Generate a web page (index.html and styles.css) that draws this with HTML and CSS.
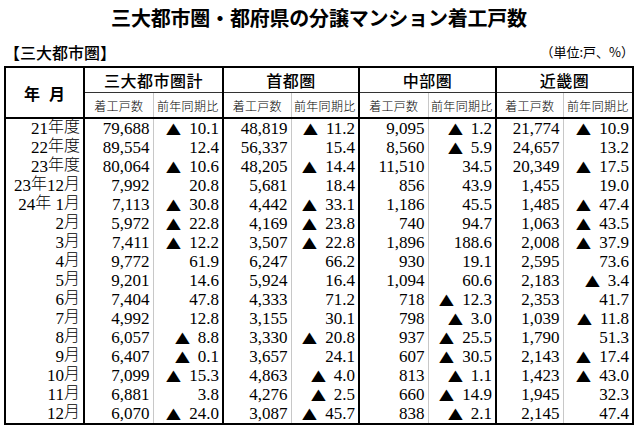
FILE: index.html
```html
<!DOCTYPE html>
<html lang="ja">
<head>
<meta charset="utf-8">
<title>三大都市圏・都府県の分譲マンション着工戸数</title>
<link rel="stylesheet" href="styles.css">
</head>
<body>
<div class="page">
  <h1 class="title">三大都市圏・都府県の分譲マンション着工戸数</h1>
  <div class="subbar">
    <span class="section">【三大都市圏】</span>
    <span class="unit">（単位:戸、%）</span>
  </div>
  <table class="data">
    <colgroup>
      <col class="c-y">
      <col class="c-a"><col class="c-b">
      <col class="c-a2"><col class="c-b2">
      <col class="c-a"><col class="c-b2">
      <col class="c-a3"><col class="c-b3">
    </colgroup>
    <thead>
      <tr class="h1">
        <th class="ym" rowspan="2">年<span class="sp"></span>月</th>
        <th class="grp" colspan="2">三大都市圏計</th>
        <th class="grp" colspan="2">首都圏</th>
        <th class="grp" colspan="2">中部圏</th>
        <th class="grp" colspan="2">近畿圏</th>
      </tr>
      <tr class="h2">
        <th class="sub sn">着工戸数</th><th class="sub sr">前年同期比</th>
        <th class="sub sn">着工戸数</th><th class="sub sr">前年同期比</th>
        <th class="sub sn">着工戸数</th><th class="sub sr">前年同期比</th>
        <th class="sub sn">着工戸数</th><th class="sub sr">前年同期比</th>
      </tr>
    </thead>
    <tbody>
      <tr><td class="y">21<span class="k">年度</span></td><td class="n">79,688</td><td class="r"><span class="t">▲</span> 10.1</td><td class="n">48,819</td><td class="r"><span class="t">▲</span> 11.2</td><td class="n">9,095</td><td class="r"><span class="t">▲</span> 1.2</td><td class="n">21,774</td><td class="r"><span class="t">▲</span> 10.9</td></tr>
      <tr><td class="y">22<span class="k">年度</span></td><td class="n">89,554</td><td class="r">12.4</td><td class="n">56,337</td><td class="r">15.4</td><td class="n">8,560</td><td class="r"><span class="t">▲</span> 5.9</td><td class="n">24,657</td><td class="r">13.2</td></tr>
      <tr><td class="y">23<span class="k">年度</span></td><td class="n">80,064</td><td class="r"><span class="t">▲</span> 10.6</td><td class="n">48,205</td><td class="r"><span class="t">▲</span> 14.4</td><td class="n">11,510</td><td class="r">34.5</td><td class="n">20,349</td><td class="r"><span class="t">▲</span> 17.5</td></tr>
      <tr><td class="y">23<span class="k">年</span>12<span class="k">月</span></td><td class="n">7,992</td><td class="r">20.8</td><td class="n">5,681</td><td class="r">18.4</td><td class="n">856</td><td class="r">43.9</td><td class="n">1,455</td><td class="r">19.0</td></tr>
      <tr><td class="y">24<span class="k">年</span> 1<span class="k">月</span></td><td class="n">7,113</td><td class="r"><span class="t">▲</span> 30.8</td><td class="n">4,442</td><td class="r"><span class="t">▲</span> 33.1</td><td class="n">1,186</td><td class="r">45.5</td><td class="n">1,485</td><td class="r"><span class="t">▲</span> 47.4</td></tr>
      <tr><td class="y">2<span class="k">月</span></td><td class="n">5,972</td><td class="r"><span class="t">▲</span> 22.8</td><td class="n">4,169</td><td class="r"><span class="t">▲</span> 23.8</td><td class="n">740</td><td class="r">94.7</td><td class="n">1,063</td><td class="r"><span class="t">▲</span> 43.5</td></tr>
      <tr><td class="y">3<span class="k">月</span></td><td class="n">7,411</td><td class="r"><span class="t">▲</span> 12.2</td><td class="n">3,507</td><td class="r"><span class="t">▲</span> 22.8</td><td class="n">1,896</td><td class="r">188.6</td><td class="n">2,008</td><td class="r"><span class="t">▲</span> 37.9</td></tr>
      <tr><td class="y">4<span class="k">月</span></td><td class="n">9,772</td><td class="r">61.9</td><td class="n">6,247</td><td class="r">66.2</td><td class="n">930</td><td class="r">19.1</td><td class="n">2,595</td><td class="r">73.6</td></tr>
      <tr><td class="y">5<span class="k">月</span></td><td class="n">9,201</td><td class="r">14.6</td><td class="n">5,924</td><td class="r">16.4</td><td class="n">1,094</td><td class="r">60.6</td><td class="n">2,183</td><td class="r"><span class="t">▲</span> 3.4</td></tr>
      <tr><td class="y">6<span class="k">月</span></td><td class="n">7,404</td><td class="r">47.8</td><td class="n">4,333</td><td class="r">71.2</td><td class="n">718</td><td class="r"><span class="t">▲</span> 12.3</td><td class="n">2,353</td><td class="r">41.7</td></tr>
      <tr><td class="y">7<span class="k">月</span></td><td class="n">4,992</td><td class="r">12.8</td><td class="n">3,155</td><td class="r">30.1</td><td class="n">798</td><td class="r"><span class="t">▲</span> 3.0</td><td class="n">1,039</td><td class="r"><span class="t">▲</span> 11.8</td></tr>
      <tr><td class="y">8<span class="k">月</span></td><td class="n">6,057</td><td class="r"><span class="t">▲</span> 8.8</td><td class="n">3,330</td><td class="r"><span class="t">▲</span> 20.8</td><td class="n">937</td><td class="r"><span class="t">▲</span> 25.5</td><td class="n">1,790</td><td class="r">51.3</td></tr>
      <tr><td class="y">9<span class="k">月</span></td><td class="n">6,407</td><td class="r"><span class="t">▲</span> 0.1</td><td class="n">3,657</td><td class="r">24.1</td><td class="n">607</td><td class="r"><span class="t">▲</span> 30.5</td><td class="n">2,143</td><td class="r"><span class="t">▲</span> 17.4</td></tr>
      <tr><td class="y">10<span class="k">月</span></td><td class="n">7,099</td><td class="r"><span class="t">▲</span> 15.3</td><td class="n">4,863</td><td class="r"><span class="t">▲</span> 4.0</td><td class="n">813</td><td class="r"><span class="t">▲</span> 1.1</td><td class="n">1,423</td><td class="r"><span class="t">▲</span> 43.0</td></tr>
      <tr><td class="y">11<span class="k">月</span></td><td class="n">6,881</td><td class="r">3.8</td><td class="n">4,276</td><td class="r"><span class="t">▲</span> 2.5</td><td class="n">660</td><td class="r"><span class="t">▲</span> 14.9</td><td class="n">1,945</td><td class="r">32.3</td></tr>
      <tr><td class="y">12<span class="k">月</span></td><td class="n">6,070</td><td class="r"><span class="t">▲</span> 24.0</td><td class="n">3,087</td><td class="r"><span class="t">▲</span> 45.7</td><td class="n">838</td><td class="r"><span class="t">▲</span> 2.1</td><td class="n">2,145</td><td class="r">47.4</td></tr>
    </tbody>
  </table>
</div>
</body>
</html>
```
FILE: styles.css
```css
html, body {
  margin: 0;
  padding: 0;
  background: #fff;
  color: #000;
}
.page {
  padding: 6px 6px 0 4px;
  font-family: "Noto Sans CJK JP", sans-serif;
  text-spacing-trim: space-all;
}
.title {
  margin: 0;
  font-size: 20px;
  font-weight: 700;
  line-height: 24px;
  text-align: center;
  letter-spacing: -0.2px;
}
.subbar {
  display: flex;
  justify-content: space-between;
  align-items: center;
  margin-top: 12px;
  height: 20px;
  margin-bottom: 4px;
}
.section {
  font-size: 16px;
  font-weight: 500;
  line-height: 20px;
}
.unit {
  font-size: 13px;
  line-height: 20px;
}
.data {
  border-collapse: collapse;
  table-layout: fixed;
  width: 630px;
  border: 2px solid #000;
}
.c-y { width: 79px; }
.c-a { width: 69px; }
.c-b { width: 70px; }
.c-a2 { width: 68px; }
.c-b2 { width: 68px; }
.c-a3 { width: 67px; }
.c-b3 { width: 70px; }
th {
  padding: 0;
  font-weight: 500;
}
.h1 th { height: 23px; }
.h2 th { height: 24px; }
.ym {
  font-size: 16px;
  font-weight: 700;
  border-right: 2px solid #000;
  border-bottom: 2px solid #000;
  vertical-align: middle;
}
.sp {
  display: inline-block;
  width: 9px;
}
.grp {
  font-size: 16px;
  font-weight: 500;
  letter-spacing: 0.5px;
  border-right: 2px solid #000;
  border-bottom: 1px solid #333;
}
.sub {
  font-size: 12px;
  font-weight: 300;
  letter-spacing: 0.3px;
  border-bottom: 2px solid #000;
}
.sn { border-right: 1px solid #c8c8c8; }
.sr { border-right: 2px solid #000; }
td {
  padding: 0 3px 0 0;
  height: 19px;
  line-height: 19px;
  font-family: "Liberation Serif", serif;
  font-size: 17px;
  text-align: right;
  white-space: nowrap;
  vertical-align: bottom;
}
td.y {
  border-right: 2px solid #000;
  padding-right: 3px;
}
td.n { border-right: 1px solid #c8c8c8; }
td.r { border-right: 2px solid #000; }
.k {
  font-family: "Noto Sans CJK JP", sans-serif;
  font-size: 16px;
  font-weight: 300;
  line-height: 1px;
  vertical-align: 2px;
}
.t {
  display: inline-block;
  font-family: "Liberation Serif", serif;
  font-size: 17px;
  line-height: 1px;
  margin: 0 3px;
  transform: scale(1.45, 1.15);
  transform-origin: 50% 50%;
}
```
